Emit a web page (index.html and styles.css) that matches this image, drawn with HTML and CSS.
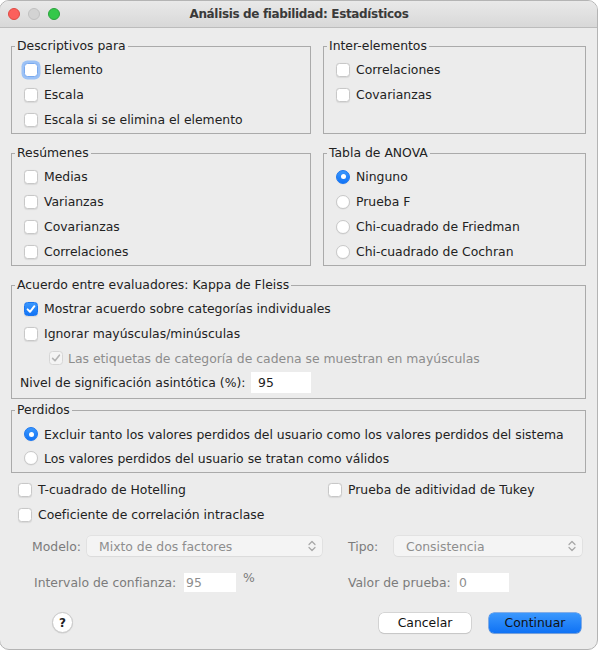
FILE: index.html
```html
<!DOCTYPE html>
<html lang="es">
<head>
<meta charset="utf-8">
<title>Análisis de fiabilidad: Estadísticos</title>
<link rel="stylesheet" href="styles.css">
</head>
<body>
<div class="window">
  <div class="titlebar">
    <div class="lights">
      <span class="light red"></span><span class="light off"></span><span class="light green"></span>
    </div>
    <div class="title">Análisis de fiabilidad: Estadísticos</div>
    <div></div>
  </div>
  <div class="content">
    <div class="pair">
      <fieldset class="box">
        <legend>Descriptivos para</legend>
        <div class="row"><span class="cb focus"></span>Elemento</div>
        <div class="row"><span class="cb"></span>Escala</div>
        <div class="row"><span class="cb"></span>Escala si se elimina el elemento</div>
      </fieldset>
      <fieldset class="box">
        <legend>Inter-elementos</legend>
        <div class="row"><span class="cb"></span>Correlaciones</div>
        <div class="row"><span class="cb"></span>Covarianzas</div>
      </fieldset>
    </div>
    <div class="pair gap11">
      <fieldset class="box">
        <legend>Resúmenes</legend>
        <div class="row"><span class="cb"></span>Medias</div>
        <div class="row"><span class="cb"></span>Varianzas</div>
        <div class="row"><span class="cb"></span>Covarianzas</div>
        <div class="row"><span class="cb"></span>Correlaciones</div>
      </fieldset>
      <fieldset class="box">
        <legend>Tabla de ANOVA</legend>
        <div class="row"><span class="rb on"></span>Ninguno</div>
        <div class="row"><span class="rb"></span>Prueba F</div>
        <div class="row"><span class="rb"></span>Chi-cuadrado de Friedman</div>
        <div class="row"><span class="rb"></span>Chi-cuadrado de Cochran</div>
      </fieldset>
    </div>
    <fieldset class="box kappa">
      <legend>Acuerdo entre evaluadores: Kappa de Fleiss</legend>
      <div class="row"><span class="cb on"><svg viewBox="0 0 14 14" width="14" height="14"><path d="M3.6 7.4 L6 9.8 L10.4 4.2" fill="none" stroke="#fff" stroke-width="2" stroke-linecap="round" stroke-linejoin="round"/></svg></span>Mostrar acuerdo sobre categorías individuales</div>
      <div class="row"><span class="cb"></span>Ignorar mayúsculas/minúsculas</div>
      <div class="row sub disabled"><span class="cb dis"><svg viewBox="0 0 14 14" width="14" height="14"><path d="M3.6 7.4 L6 9.8 L10.4 4.2" fill="none" stroke="#b4b4b4" stroke-width="1.6" stroke-linecap="round" stroke-linejoin="round"/></svg></span>Las etiquetas de categoría de cadena se muestran en mayúsculas</div>
      <div class="row nivel"><span class="nivel-label">Nivel de significación asintótica (%):</span><span class="field nivel-field">95</span></div>
    </fieldset>
    <fieldset class="box perdidos">
      <legend>Perdidos</legend>
      <div class="row"><span class="rb on"></span>Excluir tanto los valores perdidos del usuario como los valores perdidos del sistema</div>
      <div class="row"><span class="rb"></span>Los valores perdidos del usuario se tratan como válidos</div>
    </fieldset>
    <div class="extras">
      <div class="row"><span class="cb"></span>T-cuadrado de Hotelling</div>
      <div class="row"><span class="cb"></span>Prueba de aditividad de Tukey</div>
      <div class="row"><span class="cb"></span>Coeficiente de correlación intraclase</div>
    </div>
    <div class="selrow">
      <span class="dlabel">Modelo:</span>
      <span class="select">Mixto de dos factores<svg class="updown" viewBox="0 0 8 12" width="8" height="12"><path d="M1 4.5 L4 1.5 L7 4.5 M1 7.5 L4 10.5 L7 7.5" fill="none" stroke="#a6a6a6" stroke-width="1.2" stroke-linecap="round" stroke-linejoin="round"/></svg></span>
      <span></span>
      <span class="dlabel">Tipo:</span>
      <span class="select">Consistencia<svg class="updown" viewBox="0 0 8 12" width="8" height="12"><path d="M1 4.5 L4 1.5 L7 4.5 M1 7.5 L4 10.5 L7 7.5" fill="none" stroke="#a6a6a6" stroke-width="1.2" stroke-linecap="round" stroke-linejoin="round"/></svg></span>
    </div>
    <div class="introw">
      <span class="dlabel">Intervalo de confianza:</span>
      <span class="field dfield">95</span>
      <span class="dlabel pct">%</span>
      <span class="dlabel">Valor de prueba:</span>
      <span class="field dfield">0</span>
    </div>
    <div class="buttons">
      <span class="help">?</span>
      <span class="btn cancel">Cancelar</span>
      <span class="btn primary">Continuar</span>
    </div>
  </div>
</div>
</body>
</html>
```

FILE: styles.css
```css
* { box-sizing: border-box; }
html, body { margin: 0; padding: 0; background: #ffffff; }
body {
  font-family: "Lucida Grande", "DejaVu Sans", sans-serif;
  font-size: 12.4px;
  color: #222222;
}
.window {
  width: 599px;
  height: 650px;
  margin-left: -1px;
  border: 1px solid #b4b4b4;
  border-radius: 10px;
  overflow: hidden;
  background: #ececec;
}
.titlebar {
  height: 27px;
  display: grid;
  grid-template-columns: 1fr auto 1fr;
  align-items: center;
  background: linear-gradient(#e9e9e9, #d8d8d8);
  border-bottom: 1px solid #bcbcbc;
}
.lights { display: flex; gap: 8px; padding-left: 8px; }
.light { width: 12px; height: 12px; border-radius: 50%; display: block; }
.light.red { background: #fc605c; border: 0.5px solid #de4a43; }
.light.off { background: #d3d3d3; border: 0.5px solid #c0c0c0; }
.light.green { background: #34c84a; border: 0.5px solid #2aa23c; }
.title { font-weight: bold; color: #3a3a3a; font-size: 12px; letter-spacing: -0.35px; padding-left: 1px; }

.content { padding: 10px 11px 0 11px; }
.pair { display: grid; grid-template-columns: 300px 1fr; column-gap: 12px; }

.box {
  margin: 0;
  min-width: 0;
  border: 1px solid #aaaaaa;
  padding: 3px 6px 1px 12px;
}
.gap11 { margin-top: 11px; }
.box legend {
  padding: 0 2px;
  margin-left: -9px;
  line-height: 16px;
  color: #222222;
}
.row {
  display: flex;
  align-items: center;
  height: 25px;
  gap: 6px;
  white-space: nowrap;
}
.cb, .rb {
  flex: none;
  width: 14px;
  height: 14px;
  background: #ffffff;
  border: 1px solid #c8c8c8;
  box-shadow: 0 0.5px 1px rgba(0,0,0,0.08);
  display: block;
  position: relative;
}
.cb { border-radius: 3.5px; }
.cb svg { display: block; margin: -1px; }
.cb.focus { border-color: #7aa9ee; box-shadow: 0 0 0 2.5px #9cc2f6; }
.cb.on { background: linear-gradient(#3a97fd, #1274f6); border-color: #1a76f0; }
.cb.dis { background: #f4f4f4; border-color: #d6d6d6; box-shadow: none; }
.rb { border-radius: 50%; }
.rb.on { background: linear-gradient(#3a97fd, #1274f6); border-color: #1a76f0; }
.rb.on::after {
  content: "";
  position: absolute;
  left: 3.5px; top: 3.5px;
  width: 5px; height: 5px;
  border-radius: 50%;
  background: #ffffff;
}

.kappa { margin-top: 11px; padding-bottom: 3px; }
.row.sub { padding-left: 25px; height: 24px; gap: 5px; }
.disabled { color: #8c8c8c; }
.row.nivel { margin-left: -4px; gap: 0; }
.nivel-label { width: 231px; }
.field {
  display: flex;
  align-items: center;
  background: #ffffff;
  height: 21px;
  padding-left: 7px;
}
.nivel-field { width: 60px; }

.perdidos { margin-top: 3px; padding-top: 4px; padding-bottom: 2px; }
.perdidos .row { height: 24px; }

.extras {
  margin-top: 4px;
  padding-left: 7px;
  display: grid;
  grid-template-columns: 310px 1fr;
}

.dlabel { color: #7b7b7b; white-space: nowrap; }
.selrow {
  margin-top: 9px;
  padding-left: 21px;
  display: grid;
  grid-template-columns: 55px 235px 26px 46px 188px;
  align-items: center;
  height: 20px;
}
.select {
  height: 20px;
  background: #f4f4f4;
  border-radius: 4px;
  box-shadow: 0 0 0 0.5px #d8d8d8, 0 1px 1px rgba(0,0,0,0.05);
  color: #8e8e8e;
  display: flex;
  align-items: center;
  justify-content: space-between;
  padding: 0 6px 0 12px;
}
.updown { display: block; }
.introw {
  margin-top: 17px;
  padding-left: 23px;
  display: grid;
  grid-template-columns: 150px 52px 112px 109px 52px;
  align-items: center;
  height: 19px;
}
.dfield { height: 19px; padding-left: 2px; color: #8e8e8e; }
.pct { padding-left: 7px; align-self: start; margin-top: -3px; }

.buttons {
  margin-top: 20px;
  display: flex;
  align-items: center;
  padding-left: 41px;
  padding-right: 5px;
}
.help {
  width: 21px;
  height: 21px;
  border-radius: 50%;
  background: #ffffff;
  border: 1px solid #c9c9c9;
  box-shadow: 0 0.5px 1px rgba(0,0,0,0.12);
  display: flex;
  align-items: center;
  justify-content: center;
  font-weight: bold;
  font-size: 12px;
  color: #222222;
}
.btn {
  width: 92px;
  height: 20px;
  border-radius: 5px;
  display: flex;
  align-items: center;
  justify-content: center;
  font-size: 12.4px;
  color: #111111;
}
.cancel {
  margin-left: auto;
  background: #ffffff;
  box-shadow: 0 0 0 0.5px #bdbdbd, 0 1px 1px rgba(0,0,0,0.12);
}
.primary {
  margin-left: 18px;
  background: linear-gradient(#3b98fd, #0f72f5);
  box-shadow: 0 0 0 0.5px #1a6fe0, 0 1px 1px rgba(0,0,0,0.12);
}
```
